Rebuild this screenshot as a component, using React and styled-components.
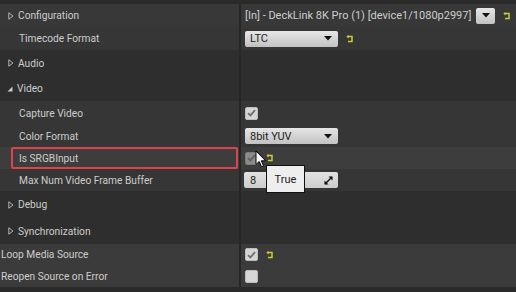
import styled, { createGlobalStyle } from 'styled-components';

const GlobalStyle = createGlobalStyle`
    body {
        margin: 0;
        background-color: #2a2a2a;
        font-family: Roboto, "Liberation Sans", sans-serif;
    }
`

const ResetIcon = () => (
    <ResetWrap>
        <svg width="8" height="8" viewBox="0 0 8 8">
            <path d="M1.4 1.6 H6 V6.4 H2" fill="none" stroke="#cacd33" strokeWidth="1.5" />
            <path d="M0.3 1.6 L2.6 0 L2.6 3.4 Z" fill="#cacd33" />
        </svg>
    </ResetWrap>
)

const Arrow = ({ open }) => open ? (
    <svg width="6" height="6" viewBox="0 0 6 6"><path d="M0.5 5.5 L5.5 0.5 L5.5 5.5 Z" fill="#c8c8c8" /></svg>
) : (
    <svg width="6" height="8" viewBox="0 0 6 8"><path d="M0.8 0.8 L5 4 L0.8 7.2 Z" fill="none" stroke="#b4b4b4" strokeWidth="1" /></svg>
)

const Caret = () => (
    <svg width="8" height="5" viewBox="0 0 8 5"><path d="M0 0 H8 L4 4.5 Z" fill="#111" /></svg>
)

const Check = ({ color }) => (
    <svg width="9" height="8" viewBox="0 0 9 8">
        <path d="M1 4.2 L3.4 6.4 L8 1.2" fill="none" stroke={color} strokeWidth="1.8" />
    </svg>
)

const Checkbox = ({ checked, disabled }) => (
    <Box disabled={disabled}>
        {checked && <Check color={disabled ? '#5e5e5e' : '#6e6e6e'} />}
    </Box>
)

const Combo = ({ label }) => (
    <ComboBox>
        <span>{label}</span>
        <Caret />
    </ComboBox>
)

const rows = [
    { h: 23, kind: 'group', name: 'Configuration', indent: 8, value: 'config' },
    { h: 23, kind: 'prop', name: 'Timecode Format', indent: 19, value: 'timecode' },
    { h: 26, kind: 'section', name: 'Audio', indent: 8 },
    { h: 25, kind: 'section', name: 'Video', indent: 7, open: true },
    { h: 24, kind: 'prop', name: 'Capture Video', indent: 19, value: 'capture' },
    { h: 22, kind: 'prop', name: 'Color Format', indent: 19, value: 'color' },
    { h: 22, kind: 'prop', name: 'Is SRGBInput', indent: 19, value: 'srgb', hover: true },
    { h: 22, kind: 'prop', name: 'Max Num Video Frame Buffer', indent: 19, value: 'frames' },
    { h: 27, kind: 'section', name: 'Debug', indent: 8 },
    { h: 26, kind: 'section', name: 'Synchronization', indent: 8 },
    { h: 21, kind: 'root', name: 'Loop Media Source', indent: 1, value: 'loop' },
    { h: 22, kind: 'root', name: 'Reopen Source on Error', indent: 1, value: 'reopen' },
]

const renderValue = (value) => {
    switch (value) {
        case 'config':
            return (
                <>
                    <ValueText>[In] - DeckLink 8K Pro (1) [device1/1080p2997]</ValueText>
                    <SmallCombo><Caret /></SmallCombo>
                    <ResetIcon />
                </>
            )
        case 'timecode':
            return <><Combo label="LTC" /><ResetIcon /></>
        case 'capture':
            return <Checkbox checked />
        case 'color':
            return <Combo label="8bit YUV" />
        case 'srgb':
            return <><Checkbox checked disabled /><ResetIcon /></>
        case 'frames':
            return (
                <SpinBox>
                    <span>8</span>
                    <svg width="9" height="9" viewBox="0 0 9 9">
                        <path d="M1 8 L8 1" stroke="#111" strokeWidth="1.4" />
                        <path d="M4.5 0.5 H8.5 V4.5 Z" fill="#111" />
                        <path d="M0.5 4.5 V8.5 H4.5 Z" fill="#111" />
                    </svg>
                </SpinBox>
            )
        case 'loop':
            return <><Checkbox checked /><ResetIcon /></>
        case 'reopen':
            return <Checkbox />
        default:
            return null
    }
}

const App = () => {
    return (
        <Panel>
            <GlobalStyle />
            <Strip h={4} />
            {rows.map((row) => (
                <Row key={row.name} h={row.h} kind={row.kind} hover={row.hover}>
                    <NameCell indent={row.indent}>
                        {(row.kind === 'group' || row.kind === 'section') && (
                            <Expander><Arrow open={row.open} /></Expander>
                        )}
                        <Label>{row.name}</Label>
                        {row.hover && <Highlight />}
                    </NameCell>
                    <ValueCell>{renderValue(row.value)}</ValueCell>
                </Row>
            ))}
            <Strip h={5} />

            <Cursor>
                <svg width="12" height="18" viewBox="0 0 12 18">
                    <path d="M1 1 V14.5 L4.2 11.5 L6.6 16.8 L8.6 15.9 L6.3 10.8 L10.6 10.8 Z" fill="#fff" stroke="#000" strokeWidth="1" />
                </svg>
            </Cursor>
            <Tooltip>True</Tooltip>
        </Panel>
    )
}

export default App;

const Panel = styled.div`
    position: relative;
    width: 516px;
    height: 292px;
    overflow: hidden;
    background-color: #2a2a2a;
    color: #cdcdcd;
    font-size: 11px;
`

const Strip = styled.div`
    height: ${({ h }) => h}px;
    background-color: #2a2a2a;
`

const rowBg = {
    group: '#383838',
    prop: '#363636',
    section: '#2e2e2e',
    root: '#3b3b3b',
}

const Row = styled.div`
    display: flex;
    height: ${({ h }) => h}px;
    background-color: ${({ kind, hover }) => hover ? '#3d3d3d' : rowBg[kind]};
`

const NameCell = styled.div`
    position: relative;
    box-sizing: border-box;
    width: 241px;
    flex-shrink: 0;
    display: flex;
    align-items: center;
    padding-left: ${({ indent }) => indent}px;
    border-right: 2px solid #262626;
`

const Expander = styled.span`
    display: flex;
    width: 10px;
    align-items: center;
`

const Label = styled.span`
    white-space: nowrap;
    font-size: 10.2px;
`

const Highlight = styled.div`
    position: absolute;
    left: 11px;
    right: 1px;
    top: 0;
    bottom: 0;
    border: 2px solid #d9454a;
    border-radius: 2px;
`

const ValueCell = styled.div`
    display: flex;
    align-items: center;
    gap: 8px;
    padding-left: 4px;
`

const ValueText = styled.span`
    white-space: nowrap;
    margin-right: -3px;
`

const ResetWrap = styled.span`
    display: flex;
    align-items: center;
`

const ComboBox = styled.div`
    box-sizing: border-box;
    width: 93px;
    height: 16px;
    display: flex;
    align-items: center;
    justify-content: space-between;
    padding: 0 6px 0 5px;
    border-radius: 2px;
    background: linear-gradient(#e6e6e6, #c2c2c2);
    color: #1e1e1e;
`

const SmallCombo = styled(ComboBox)`
    width: 19px;
    justify-content: center;
    padding: 0;
`

const SpinBox = styled(ComboBox)`
    width: 94px;
    margin-left: -1px;
    background: linear-gradient(#e2e2e2, #cdcdcd);
    padding: 0 5px 0 6px;
`

const Box = styled.div`
    box-sizing: border-box;
    width: 13px;
    height: 13px;
    display: flex;
    align-items: center;
    justify-content: center;
    border-radius: 2px;
    background-color: ${({ disabled }) => disabled ? '#8c8c8c' : '#d6d6d6'};
    border: 1px solid ${({ disabled }) => disabled ? '#7a7a7a' : '#bdbdbd'};
`

const Cursor = styled.div`
    position: absolute;
    left: 255px;
    top: 150px;
    line-height: 0;
`

const Tooltip = styled.div`
    position: absolute;
    left: 266px;
    top: 165px;
    box-sizing: border-box;
    width: 39px;
    height: 28px;
    display: flex;
    align-items: center;
    justify-content: center;
    background-color: #eeeeee;
    border: 1px solid #111;
    color: #222;
    font-size: 11px;
`
